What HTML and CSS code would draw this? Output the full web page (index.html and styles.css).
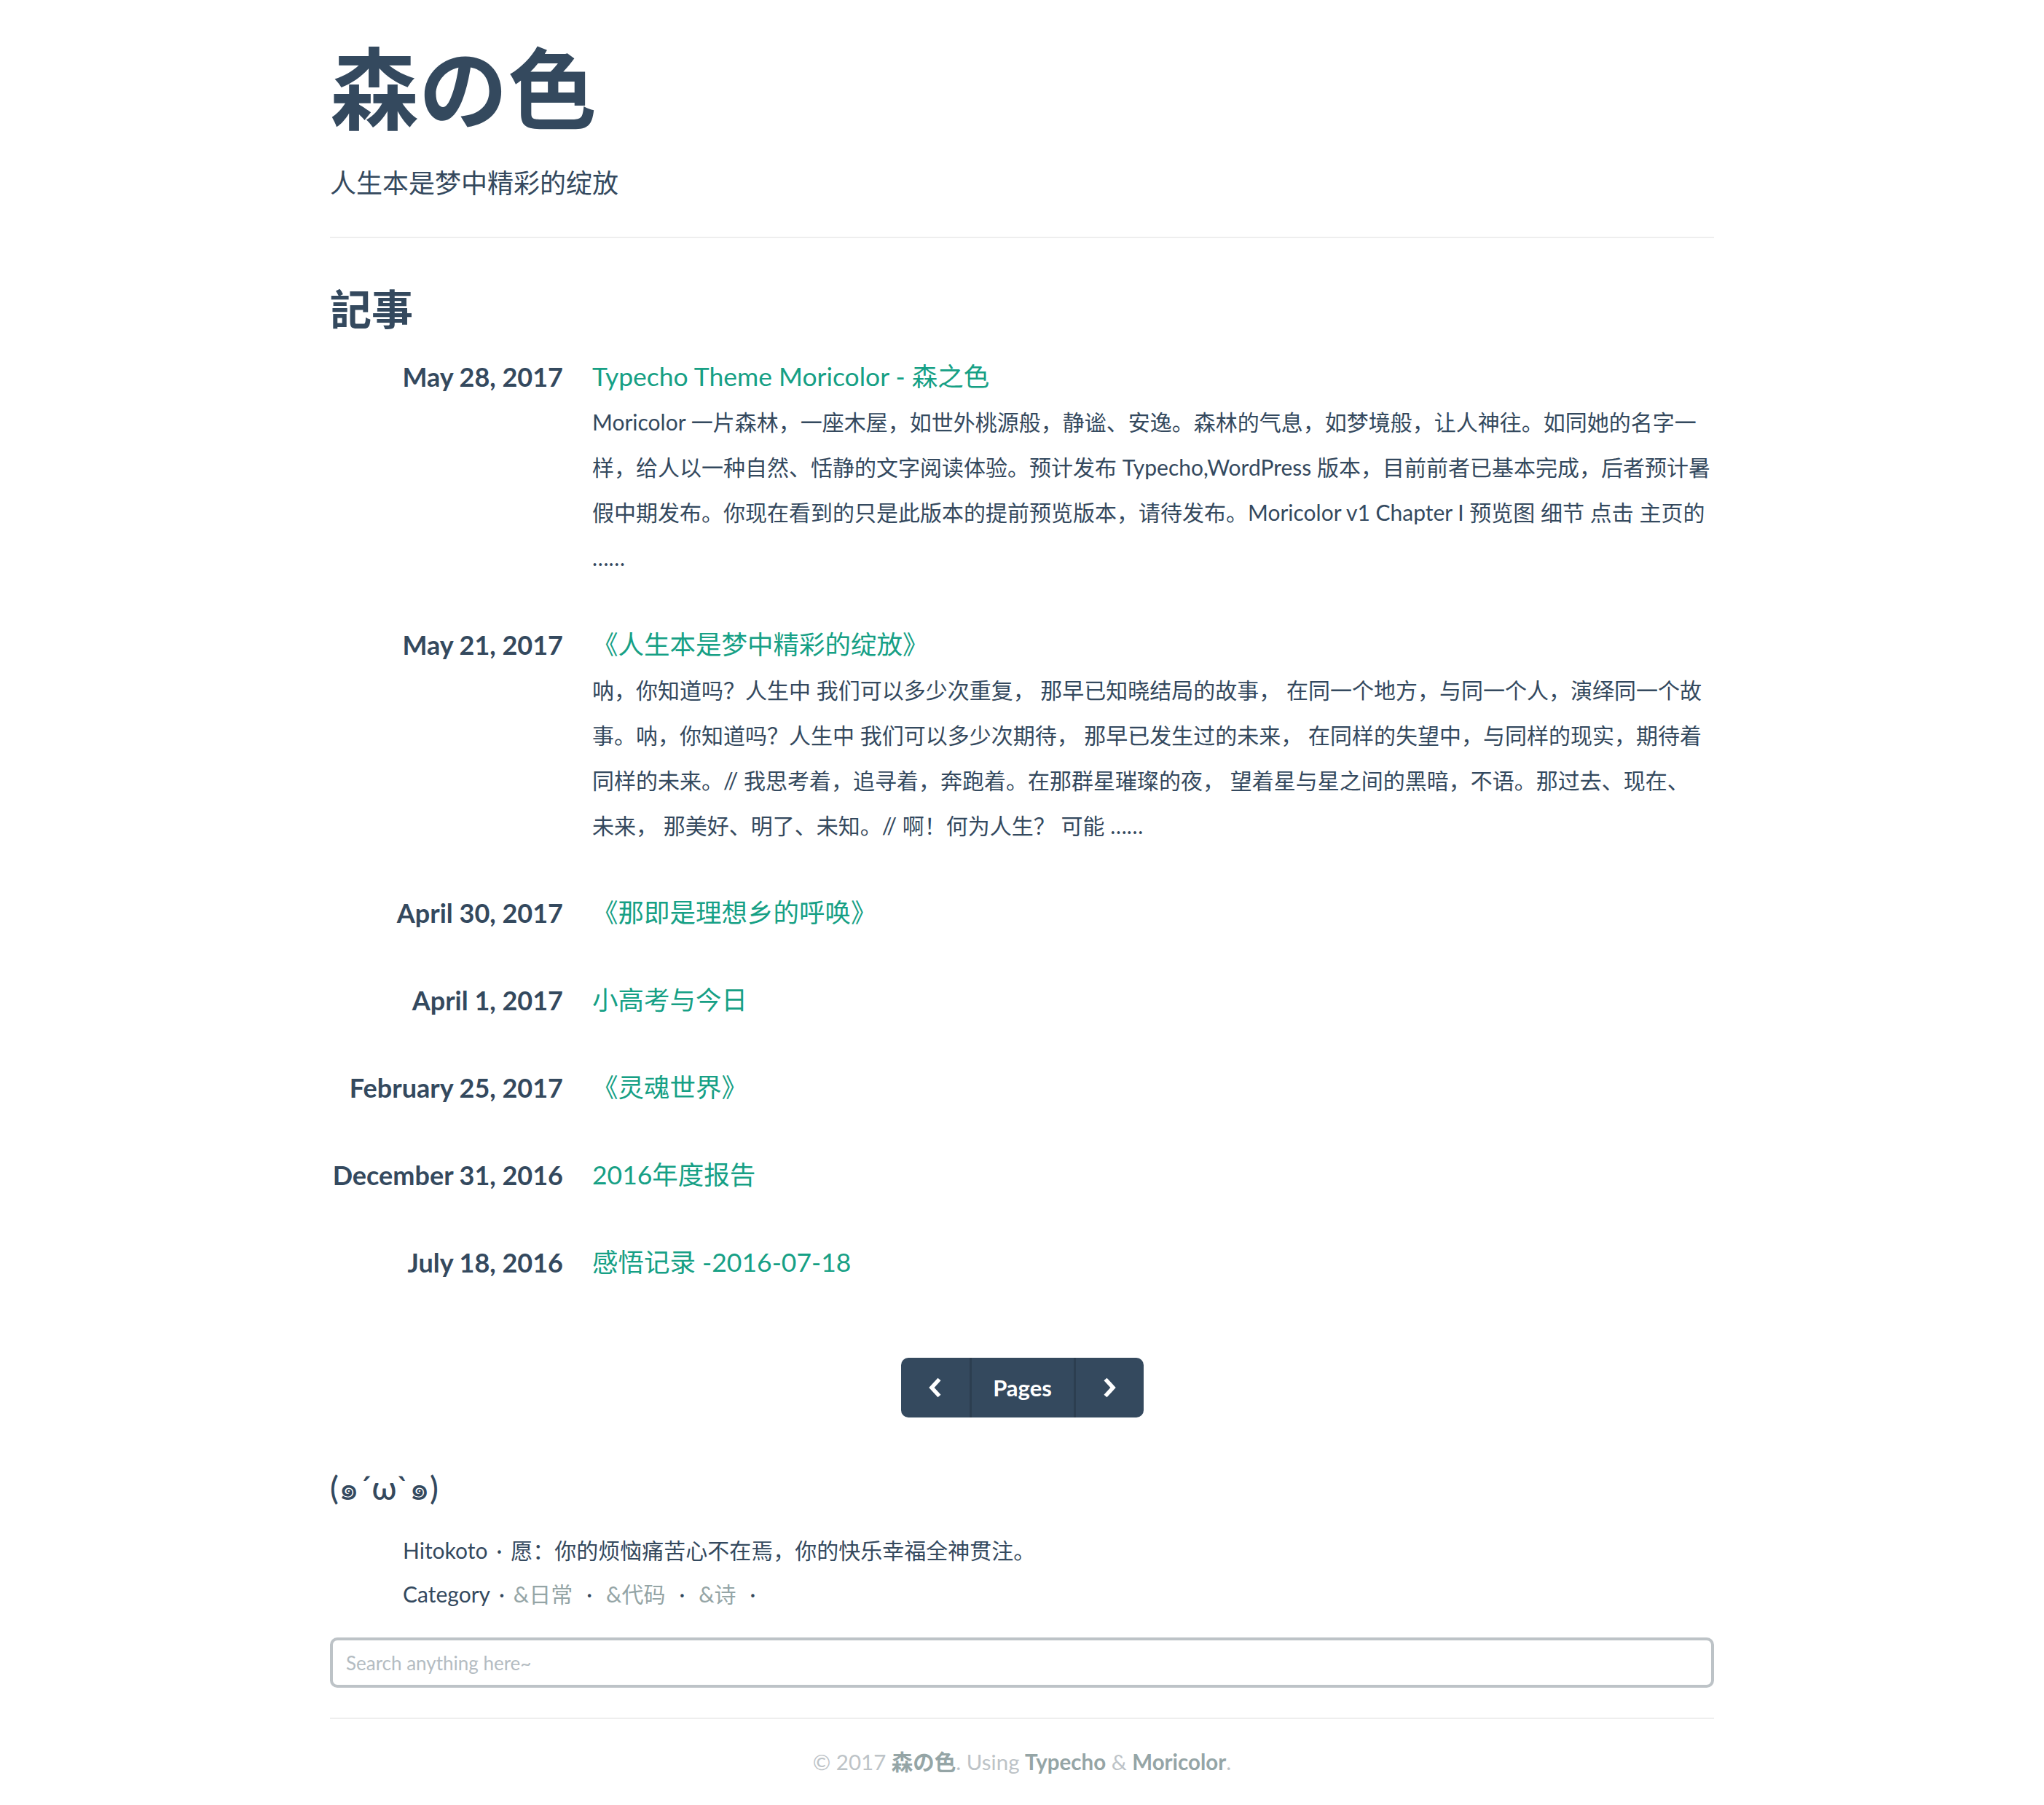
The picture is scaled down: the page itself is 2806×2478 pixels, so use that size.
FILE: index.html
```html
<!DOCTYPE html>
<html lang="zh-CN">
<head>
<meta charset="utf-8">
<title>森の色</title>
<link rel="stylesheet" href="styles.css">
</head>
<body>
<div class="container">
  <header class="site-header">
    <h1 class="logo">森の色</h1>
    <p class="tagline">人生本是梦中精彩的绽放</p>
  </header>

  <main>
    <h2 class="section-title">記事</h2>
    <ul class="posts">
      <li class="post">
        <span class="post-date">May 28, 2017</span>
        <div class="post-body">
          <a class="post-title" href="#">Typecho Theme Moricolor - 森之色</a>
          <p class="post-excerpt">Moricolor 一片森林，一座木屋，如世外桃源般，静谧、安逸。森林的气息，如梦境般，让人神往。如同她的名字一样，给人以一种自然、恬静的文字阅读体验。预计发布 Typecho,WordPress 版本，目前前者已基本完成，后者预计暑假中期发布。你现在看到的只是此版本的提前预览版本，请待发布。Moricolor v1 Chapter I 预览图 细节 点击 主页的 ……</p>
        </div>
      </li>
      <li class="post">
        <span class="post-date">May 21, 2017</span>
        <div class="post-body">
          <a class="post-title" href="#">《人生本是梦中精彩的绽放》</a>
          <p class="post-excerpt">呐，你知道吗？人生中 我们可以多少次重复， 那早已知晓结局的故事， 在同一个地方，与同一个人，演绎同一个故事。呐，你知道吗？人生中 我们可以多少次期待， 那早已发生过的未来， 在同样的失望中，与同样的现实，期待着同样的未来。// 我思考着，追寻着，奔跑着。在那群星璀璨的夜， 望着星与星之间的黑暗，不语。那过去、现在、<span class="keep">未来，</span> 那美好、明了、未知。// 啊！何为人生？ 可能 ……</p>
        </div>
      </li>
      <li class="post">
        <span class="post-date">April 30, 2017</span>
        <div class="post-body"><a class="post-title" href="#">《那即是理想乡的呼唤》</a></div>
      </li>
      <li class="post">
        <span class="post-date">April 1, 2017</span>
        <div class="post-body"><a class="post-title" href="#">小高考与今日</a></div>
      </li>
      <li class="post">
        <span class="post-date">February 25, 2017</span>
        <div class="post-body"><a class="post-title" href="#">《灵魂世界》</a></div>
      </li>
      <li class="post">
        <span class="post-date">December 31, 2016</span>
        <div class="post-body"><a class="post-title" href="#">2016年度报告</a></div>
      </li>
      <li class="post">
        <span class="post-date">July 18, 2016</span>
        <div class="post-body"><a class="post-title" href="#">感悟记录 -2016-07-18</a></div>
      </li>
    </ul>

    <nav class="pager">
      <a class="pager-btn pager-prev" href="#" aria-label="Previous">
        <svg width="18" height="28" viewBox="0 0 18 28"><polyline points="14.5,2.5 4,14 14.5,25.5" fill="none" stroke="#fff" stroke-width="5.5"/></svg>
      </a>
      <span class="pager-btn pager-label">Pages</span>
      <a class="pager-btn pager-next" href="#" aria-label="Next">
        <svg width="18" height="28" viewBox="0 0 18 28"><polyline points="3.5,2.5 14,14 3.5,25.5" fill="none" stroke="#fff" stroke-width="5.5"/></svg>
      </a>
    </nav>
  </main>

  <section class="extra">
    <h3 class="extra-title">(๑´ω`๑)</h3>
    <div class="extra-lines">
      <p class="extra-line">Hitokoto<span class="dot">·</span>愿：你的烦恼痛苦心不在焉，你的快乐幸福全神贯注。</p>
      <p class="extra-line">Category<span class="dot">·</span><a class="cat" href="#">&amp;日常</a><span class="dot wide">·</span><a class="cat" href="#">&amp;代码</a><span class="dot wide">·</span><a class="cat" href="#">&amp;诗</a><span class="dot wide">·</span></p>
    </div>
    <input class="search" type="text" placeholder="Search anything here~">
  </section>

  <footer class="site-footer">
    <p>© 2017 <strong>森の色</strong>. Using <strong>Typecho</strong> &amp; <strong>Moricolor</strong>.</p>
  </footer>
</div>
</body>
</html>
```

FILE: styles.css
```css
* { box-sizing: border-box; }

html, body {
  margin: 0;
  padding: 0;
  background: #fff;
}

body {
  font-family: Lato, "Noto Sans CJK SC", sans-serif;
  color: #34495e;
  font-size: 30px;
}

a { text-decoration: none; }

.container {
  width: 1900px;
  margin: 0 auto;
}

.site-header {
  padding-top: 47px;
  border-bottom: 2px solid #eeeeee;
  padding-bottom: 49px;
}

.logo {
  margin: 0;
  font-family: Lato, "Noto Sans CJK JP", sans-serif;
  font-weight: 700;
  font-size: 122px;
  line-height: 149px;
  color: #34495e;
}

.tagline {
  margin: 30px 0 0;
  font-size: 36px;
  line-height: 50px;
}

.section-title {
  margin: 57px 0 0;
  font-family: Lato, "Noto Sans CJK JP", sans-serif;
  font-weight: 700;
  font-size: 57px;
  line-height: 80px;
}

.posts {
  list-style: none;
  margin: 22px 0 0;
  padding: 0;
  display: flex;
  flex-direction: column;
  gap: 58px;
}

.post {
  display: grid;
  grid-template-columns: 320px 1fr;
  column-gap: 40px;
}

.post-date {
  text-align: right;
  font-weight: 700;
  font-size: 36px;
  line-height: 62px;
  white-space: nowrap;
}

.post-title {
  display: block;
  color: #16a085;
  font-size: 35.5px;
  line-height: 62px;
}

.post-excerpt {
  margin: 0;
  font-size: 30px;
  line-height: 62px;
}

.keep {
  white-space: nowrap;
}

.pager {
  margin: 100px auto 0;
  width: 333px;
  height: 82px;
  display: flex;
  background: #34495e;
  border-radius: 10px;
  overflow: hidden;
}

.pager-btn {
  display: flex;
  align-items: center;
  justify-content: center;
  color: #fff;
}

.pager-prev { width: 94px; }
.pager-label {
  width: 146px;
  border-left: 3px solid #2c3e50;
  border-right: 3px solid #2c3e50;
  font-weight: 700;
  font-size: 31px;
}
.pager-next { width: 93px; }

.extra {
  margin-top: 66px;
}

.extra-title {
  margin: 0;
  font-family: Lato, "Noto Sans CJK SC", sans-serif;
  font-weight: 500;
  font-size: 44px;
  line-height: 60px;
}

.extra-lines {
  margin-top: 26px;
  padding-left: 100px;
}

.extra-line {
  margin: 0;
  font-size: 30px;
  line-height: 60px;
}

.dot {
  margin: 0 12px;
}

.dot.wide {
  margin: 0 19px;
}

.cat {
  color: #95a5a6;
}

.search {
  display: block;
  width: 100%;
  height: 69px;
  margin-top: 30px;
  border: 4px solid #bdc3c7;
  border-radius: 10px;
  padding: 0 18px;
  font-family: Lato, "Noto Sans CJK SC", sans-serif;
  font-size: 26px;
  color: #34495e;
  outline: none;
}

.search::placeholder {
  color: #b4bcc2;
}

.site-footer {
  margin-top: 41px;
  border-top: 2px solid #eeeeee;
  padding: 39px 0 39px;
  text-align: center;
}

.site-footer p {
  margin: 0;
  font-size: 29.5px;
  line-height: 40px;
  color: #bdc3c7;
}

.site-footer strong {
  font-weight: 700;
  color: #95a5a6;
}
```
